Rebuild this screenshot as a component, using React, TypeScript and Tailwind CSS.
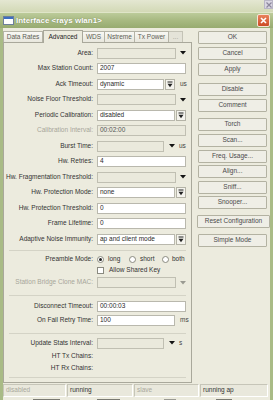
import React from "react";

const Tri = ({ light }: { light?: boolean }) => (
  <svg width="6" height="4" viewBox="0 0 6 4" className="shrink-0">
    <polygon points="0,0 6,0 3,3.5" fill={light ? "#9a9a92" : "#141414"} />
  </svg>
);

const ComboBtn = () => (
  <div className="ml-[1px] w-[10px] h-[11px] shrink-0 border border-[#b4b3a6] bg-[#f5f4ee] flex items-center justify-center">
    <svg width="6" height="7" viewBox="0 0 6 7">
      <rect x="0.5" y="0.5" width="5" height="1" fill="#222" />
      <polygon points="0.5,2.8 5.5,2.8 3,6.3" fill="#222" />
    </svg>
  </div>
);

const Input = ({
  w,
  gray,
  value,
}: {
  w: string;
  gray?: boolean;
  value?: string;
}) => (
  <div
    className={`${w} h-[11px] shrink-0 border ${
      gray ? "border-[#c0bfb2] bg-[#eae9dc] text-[#555]" : "border-[#b9b8ad] bg-white text-[#2a2a2a]"
    } flex items-center pl-[2px] leading-none`}
  >
    {value}
  </div>
);

const Row = ({
  h,
  label,
  disabled,
  children,
}: {
  h: string;
  label: string;
  disabled?: boolean;
  children?: React.ReactNode;
}) => (
  <div className={`${h} flex items-center shrink-0`}>
    <div
      className={`w-[89px] shrink-0 text-right leading-none ${
        disabled ? "text-[#a7a69a]" : "text-[#333]"
      }`}
    >
      {label}
    </div>
    <div className="ml-[4px] flex items-center">{children}</div>
  </div>
);

const Sep = ({ cls }: { cls: string }) => (
  <div className={`${cls} mx-[5px] h-[1px] bg-[#d4d3c6] shrink-0`} />
);

const Radio = ({ checked }: { checked?: boolean }) => (
  <div className="w-[7px] h-[7px] rounded-full border border-[#8a8a80] bg-white flex items-center justify-center shrink-0">
    {checked && <div className="w-[3px] h-[3px] rounded-full bg-[#222]" />}
  </div>
);

const Btn = ({ label, cls }: { label: string; cls?: string }) => (
  <div
    className={`${cls ?? ""} h-[13px] shrink-0 border border-[#b3b2a2] rounded-[1px] bg-[#efeee6] flex items-center justify-center text-[#4a4a4a] leading-none`}
  >
    {label}
  </div>
);

export default function App() {
  return (
    <div className="w-[273px] h-[400px] overflow-hidden bg-[#ecebde] font-['Liberation_Sans',Arial,sans-serif] text-[6.5px] flex flex-col">
      {/* top strip of parent window */}
      <div className="h-[12px] shrink-0 bg-gradient-to-b from-[#e4e7d2] to-[#d3d9b6] flex justify-end">
        <div className="w-[9px] h-[9px] bg-[#d9d6e2] border border-[#b9b6c6] flex items-center justify-center">
          <svg width="6" height="6" viewBox="0 0 6 6">
            <path d="M0.5 0.5 L5.5 5.5 M5.5 0.5 L0.5 5.5" stroke="#8b879c" strokeWidth="1.2" />
          </svg>
        </div>
      </div>

      {/* window */}
      <div className="flex-1 flex flex-col bg-[#a9bb86]">
        {/* title bar */}
        <div className="h-[16px] shrink-0 bg-gradient-to-b from-[#bccb9a] via-[#a7b981] to-[#97ab70] flex items-center pl-[3px] pr-[3px] border-t border-[#dfe5c8]">
          <div className="w-[11px] h-[9px] bg-white border border-[#6d7f9c] flex flex-col">
            <div className="h-[2px] bg-[#3d6fc1]" />
          </div>
          <div className="ml-[2px] text-white font-bold text-[8px] leading-none [text-shadow:0_0_1px_rgba(60,70,30,0.6)]">
            Interface &lt;rays wlan1&gt;
          </div>
          <div className="ml-auto w-[13px] h-[13px] rounded-[2px] border border-[#f4e6d6] bg-gradient-to-b from-[#e9825c] to-[#cc4a23] flex items-center justify-center">
            <svg width="7" height="7" viewBox="0 0 7 7">
              <path d="M1 1 L6 6 M6 1 L1 6" stroke="#fff" strokeWidth="1.6" />
            </svg>
          </div>
        </div>

        {/* body */}
        <div className="flex-1 mx-[3px] bg-[#ecebde] flex flex-col">
          <div className="h-[355px] shrink-0 flex">
            {/* left: tabs + panel */}
            <div className="w-[189px] shrink-0 flex flex-col">
              <div className="h-[14px] shrink-0 flex items-end text-[#5d5d56]">
                <div className="w-[40px] h-[11px] border border-b-0 border-[#b4b3a6] bg-gradient-to-b from-[#f8f8f4] to-[#e8e7dd] flex items-center justify-center leading-none">
                  Data Rates
                </div>
                <div className="w-[40px] h-[13px] border border-b-0 border-[#a9a89b] bg-[#ecebde] flex items-center justify-center leading-none text-[#222] relative top-[1px]">
                  Advanced
                </div>
                <div className="w-[22px] h-[11px] border border-b-0 border-l-0 border-[#b4b3a6] bg-gradient-to-b from-[#f8f8f4] to-[#e8e7dd] flex items-center justify-center leading-none">
                  WDS
                </div>
                <div className="w-[30px] h-[11px] border border-b-0 border-l-0 border-[#b4b3a6] bg-gradient-to-b from-[#f8f8f4] to-[#e8e7dd] flex items-center justify-center leading-none">
                  Nstreme
                </div>
                <div className="w-[34px] h-[11px] border border-b-0 border-l-0 border-[#b4b3a6] bg-gradient-to-b from-[#f8f8f4] to-[#e8e7dd] flex items-center justify-center leading-none">
                  Tx Power
                </div>
                <div className="w-[14px] h-[11px] border border-b-0 border-l-0 border-[#c4c3b6] bg-[#e4e3d8] flex items-center justify-center leading-none text-[#a09f94]">
                  ...
                </div>
              </div>
              <div className="flex-1 border border-[#a9a89b] bg-[#ecebde] flex flex-col pt-[2.25px]">
                <Row h="h-[15.5px]" label="Area:">
                  <Input w="w-[79px]" gray />
                  <div className="ml-[4px]"><Tri /></div>
                </Row>
                <Row h="h-[15.5px]" label="Max Station Count:">
                  <Input w="w-[89px]" value="2007" />
                </Row>
                <Row h="h-[15.5px]" label="Ack Timeout:">
                  <Input w="w-[67px]" value="dynamic" />
                  <ComboBtn />
                  <span className="ml-[5px] text-[#444] leading-none">us</span>
                </Row>
                <Row h="h-[15.5px]" label="Noise Floor Threshold:">
                  <Input w="w-[79px]" gray />
                  <div className="ml-[4px]"><Tri /></div>
                </Row>
                <Row h="h-[15.5px]" label="Periodic Calibration:">
                  <Input w="w-[78px]" value="disabled" />
                  <ComboBtn />
                </Row>
                <Row h="h-[15.5px]" label="Calibration Interval:" disabled>
                  <Input w="w-[89px]" gray value="00:02:00" />
                </Row>
                <Row h="h-[15.5px]" label="Burst Time:">
                  <Input w="w-[67px]" gray />
                  <div className="ml-[5px]"><Tri /></div>
                  <span className="ml-[4px] text-[#444] leading-none">us</span>
                </Row>
                <Row h="h-[15.5px]" label="Hw. Retries:">
                  <Input w="w-[89px]" value="4" />
                </Row>
                <Row h="h-[15.5px]" label="Hw. Fragmentation Threshold:">
                  <Input w="w-[79px]" gray />
                  <div className="ml-[4px]"><Tri /></div>
                </Row>
                <Row h="h-[15.5px]" label="Hw. Protection Mode:">
                  <Input w="w-[78px]" value="none" />
                  <ComboBtn />
                </Row>
                <Row h="h-[15.5px]" label="Hw. Protection Threshold:">
                  <Input w="w-[89px]" value="0" />
                </Row>
                <Row h="h-[15.5px]" label="Frame Lifetime:">
                  <Input w="w-[89px]" value="0" />
                </Row>
                <Row h="h-[15.5px]" label="Adaptive Noise Immunity:">
                  <Input w="w-[78px]" value="ap and client mode" />
                  <ComboBtn />
                </Row>

                <Sep cls="mt-[3.25px]" />

                <Row h="h-[11px] mt-[2.5px]" label="Preamble Mode:">
                  <Radio checked />
                  <span className="ml-[4px] w-[21px] text-[#333] leading-none">long</span>
                  <Radio />
                  <span className="ml-[4px] w-[22px] text-[#333] leading-none">short</span>
                  <Radio />
                  <span className="ml-[3px] text-[#333] leading-none">both</span>
                </Row>
                <Row h="h-[11px]" label="">
                  <div className="w-[7px] h-[7px] border border-[#8a8a80] bg-white shrink-0" />
                  <span className="ml-[5px] text-[#333] leading-none">Allow Shared Key</span>
                </Row>
                <Row h="h-[14px]" label="Station Bridge Clone MAC:" disabled>
                  <Input w="w-[79px]" gray />
                  <div className="ml-[4px]"><Tri light /></div>
                </Row>

                <Sep cls="mt-[5.5px]" />

                <Row h="h-[15px] mt-[2.5px]" label="Disconnect Timeout:">
                  <Input w="w-[89px]" value="00:00:03" />
                </Row>
                <Row h="h-[14px]" label="On Fail Retry Time:">
                  <Input w="w-[78px]" value="100" />
                  <span className="ml-[5px] text-[#444] leading-none">ms</span>
                </Row>

                <Sep cls="mt-[5.5px]" />

                <Row h="h-[16px] mt-[1px]" label="Update Stats Interval:">
                  <Input w="w-[67px]" gray />
                  <div className="ml-[5px]"><Tri /></div>
                  <span className="ml-[4px] text-[#444] leading-none">s</span>
                </Row>
                <Row h="h-[10px]" label="HT Tx Chains:" />
                <Row h="h-[15px]" label="HT Rx Chains:" />

                <Sep cls="mt-[1px]" />
              </div>
            </div>

            {/* right: buttons */}
            <div className="flex-1 flex flex-col pl-[6px] pt-[3px]">
              <Btn label="OK" cls="w-[69px]" />
              <Btn label="Cancel" cls="w-[69px] mt-[3px]" />
              <Btn label="Apply" cls="w-[69px] mt-[3px]" />
              <Btn label="Disable" cls="w-[69px] mt-[7px]" />
              <Btn label="Comment" cls="w-[69px] mt-[3px]" />
              <Btn label="Torch" cls="w-[69px] mt-[6px]" />
              <Btn label="Scan..." cls="w-[69px] mt-[3px]" />
              <Btn label="Freq. Usage..." cls="w-[69px] mt-[2.5px]" />
              <Btn label="Align..." cls="w-[69px] mt-[2.5px]" />
              <Btn label="Sniff..." cls="w-[69px] mt-[2.5px]" />
              <Btn label="Snooper..." cls="w-[69px] mt-[2.5px]" />
              <Btn label="Reset Configuration" cls="w-[73px] -ml-[1px] mt-[6px]" />
              <Btn label="Simple Mode" cls="w-[69px] mt-[6px]" />
            </div>
          </div>

          {/* status bar */}
          <div className="h-[13px] mt-[1px] shrink-0 flex pr-[2px] gap-[1px]">
            <div className="w-[63px] border border-[#c6c5b8] border-b-white border-r-white bg-[#e9e8dc] flex items-center pl-[2px] leading-none text-[#a9a89d]">
              disabled
            </div>
            <div className="w-[66px] border border-[#c6c5b8] border-b-white border-r-white bg-[#e9e8dc] flex items-center pl-[2px] leading-none text-[#333]">
              running
            </div>
            <div className="w-[65px] border border-[#c6c5b8] border-b-white border-r-white bg-[#e9e8dc] flex items-center pl-[2px] leading-none text-[#a9a89d]">
              slave
            </div>
            <div className="flex-1 border border-[#c6c5b8] border-b-white border-r-white bg-[#e9e8dc] flex items-center pl-[2px] leading-none text-[#333]">
              running ap
            </div>
          </div>

          {/* edge of the window below: illegible fragments */}
          <div className="h-[3px] mt-[1px] flex items-end">
            <div className="ml-[30px] w-[27px] h-[2px] bg-[#7a7a72]" />
            <div className="ml-[37px] w-[23px] h-[2px] bg-[#7a7a72]" />
            <div className="ml-[44px] w-[12px] h-[2px] bg-[#9a9a92]" />
            <div className="ml-[40px] w-[16px] h-[2px] bg-[#7a7a72]" />
          </div>
        </div>
      </div>
    </div>
  );
}
